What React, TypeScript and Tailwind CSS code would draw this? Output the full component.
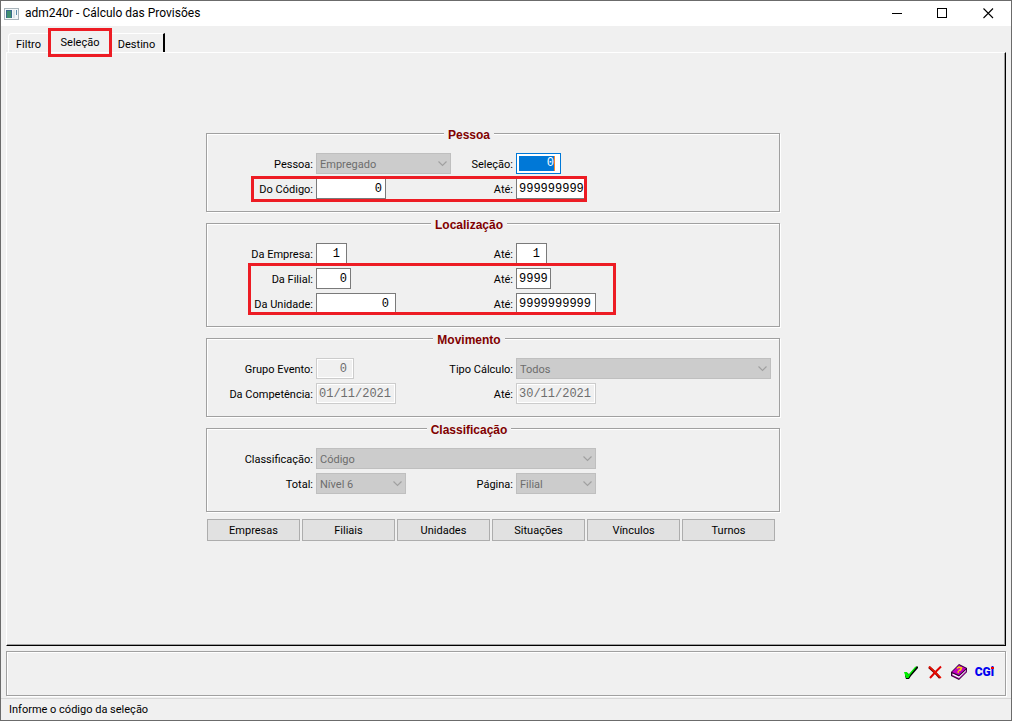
import type { InputHTMLAttributes, ReactNode } from 'react'
import clsx from 'clsx'

const etched = 'border border-[#a0a0a0] shadow-[1px_1px_0_#fff,inset_1px_1px_0_#fff]'

function Group({ title, className, children }: { title: string; className?: string; children: ReactNode }) {
  return (
    <fieldset className={clsx('min-w-0 pr-12 pt-[10px]', className ?? 'pb-[12px]', etched)}>
      <legend className="mx-auto bg-[#f0f0f0] px-1 pt-1 font-['Liberation_Sans',sans-serif] text-[12px] font-bold leading-[15px] text-[#800000]">
        {title}
      </legend>
      <div className="-mr-12 flex flex-col gap-1">{children}</div>
    </fieldset>
  )
}

function Row({ children }: { children: ReactNode }) {
  return <div className="grid grid-cols-[106px_130px_64px_1fr] items-center gap-x-[3px]">{children}</div>
}

function Label({ id, children }: { id: string; children: ReactNode }) {
  return (
    <label htmlFor={id} className="whitespace-nowrap pt-[2px] text-right">
      {children}
    </label>
  )
}

function Field({ className, ...props }: InputHTMLAttributes<HTMLInputElement>) {
  return (
    <input
      type="text"
      className={clsx(
        "h-[21px] border border-[#7a7a7a] bg-white pl-[2px] font-['Liberation_Mono',monospace] text-[12px] text-black outline-none",
        'disabled:border-[#ccc] disabled:bg-[#f0f0f0] disabled:text-[#6d6d6d] disabled:shadow-[inset_0_0_0_1px_#fff]',
        className,
      )}
      {...props}
    />
  )
}

function Combo({ id, value, className }: { id: string; value: string; className: string }) {
  return (
    <div className={clsx('relative h-[21px]', className)}>
      <select
        id={id}
        disabled
        className="block h-full w-full appearance-none border border-[#bfbfbf] bg-[#ccc] pl-[3px] pt-[2px] text-[#6d6d6d] opacity-100"
      >
        <option>{value}</option>
      </select>
      <svg className="pointer-events-none absolute right-1 top-2 h-[6px] w-[9px]" viewBox="0 0 9 6" fill="none">
        <path d="M.5 .5 4.5 4.5 8.5 .5" stroke="#a0a0a0" strokeWidth="1.1" />
      </svg>
    </div>
  )
}

function Marker({ className }: { className: string }) {
  return <div className={clsx('pointer-events-none absolute border-[3px] border-[#ed1c24]', className)} />
}

function TitleBar() {
  return (
    <header className="flex h-[25px] items-center bg-white pl-[3px]">
      <svg width="15" height="12" viewBox="0 0 15 12" shapeRendering="crispEdges">
        <rect width="15" height="12" fill="#a9b4ba" />
        <rect x="1" y="1" width="13" height="10" fill="#f4f8fa" />
        <rect x="2" y="2" width="6" height="8" fill="#38698c" />
        <rect x="3" y="3" width="4" height="7" fill="#3f8f70" />
        <rect x="9" y="2" width="2" height="8" fill="#dde6ea" />
        <rect x="12" y="2" width="1" height="5" fill="#5e8fae" />
      </svg>
      <h1 className="ml-[6px] text-[12px]">adm240r - Cálculo das Provisões</h1>
      <div className="ml-auto flex h-full">
        <button aria-label="Minimizar" className="flex w-[45px] items-center justify-center">
          <svg width="11" height="11" shapeRendering="crispEdges">
            <path d="M0 5.5H10" stroke="#000" />
          </svg>
        </button>
        <button aria-label="Maximizar" className="flex w-[45px] items-center justify-center">
          <svg width="11" height="11" shapeRendering="crispEdges">
            <rect x=".5" y=".5" width="9" height="9" fill="none" stroke="#000" />
          </svg>
        </button>
        <button aria-label="Fechar" className="flex w-[46px] items-center justify-center">
          <svg width="11" height="11">
            <path d="M.5 .5 10 10M10 .5 .5 10" stroke="#000" strokeWidth="1.1" />
          </svg>
        </button>
      </div>
    </header>
  )
}

function Tabs() {
  return (
    <nav role="tablist" className="flex items-end pl-[7px] pt-[7px]">
      <button role="tab" className="h-[19px] w-10 rounded-tl-sm border-l border-t border-white pt-[2px]">
        Filtro
      </button>
      <div className="relative">
        <button role="tab" aria-selected="true" className="block h-[19px] w-16">
          Seleção
        </button>
        <Marker className="-top-[5px] left-0 h-[29px] w-16" />
      </div>
      <button role="tab" className="h-[19px] w-[53px] border-r-2 border-t border-r-black border-t-white pr-[2px] pt-[2px]">
        Destino
      </button>
    </nav>
  )
}

function Toolbar() {
  return (
    <div className={clsx('mx-[5px] mt-[5px] flex h-[45px] items-center justify-end gap-2 pb-[3px] pr-[11px]', etched)}>
      <button aria-label="Confirmar">
        <svg width="16" height="16" viewBox="0 0 16 16">
          <path d="M2 9H5L6 11 13 2.500H15V4L8 12 6 15H3L2 12Z" fill="#000" />
          <path d="M1 8H4L5.500 10.500 12 3 14 2.500 7.500 10.500 5.500 14H3Z" fill="#00ee00" />
        </svg>
      </button>
      <button aria-label="Cancelar">
        <svg width="16" height="16" viewBox="0 0 16 16">
          <path d="M2 3 8 8.500 13 14" fill="none" stroke="#800000" strokeWidth="2.500" />
          <path d="M14 2.500 8 8.500 3 14" fill="none" stroke="#e00000" strokeWidth="2" />
          <path d="M2 2.500 8 8 14 14" fill="none" stroke="#f01000" strokeWidth="1.500" />
        </svg>
      </button>
      <button aria-label="Ajuda">
        <svg width="16" height="16" viewBox="0 0 16 16">
          <path d="M8 0 16 4V8L8 16 0 12V8Z" fill="#300030" />
          <path d="M8 1 15 4.500 8 11 1 8Z" fill="#c000c0" />
          <path d="M1 9.500 8 13 15.500 6V8L8 15 1 11.500Z" fill="#a000a0" />
          <path d="M1.500 9.500 8 12.500 15 6V7L8 14 1.500 11Z" fill="#fff" />
          <path d="M6 4.500 8 3 10.500 4 9.500 6 7.500 6.500M6.500 8H8" fill="none" stroke="#ffd800" strokeWidth="1.500" />
        </svg>
      </button>
      <button aria-label="CGi" className="relative text-[12px] font-black leading-4 text-[#0000f0]">
        CGi
        <span className="absolute right-0 top-[3px] h-[2px] w-[3px] bg-[#f00000]" />
      </button>
    </div>
  )
}

const filters = ['Empresas', 'Filiais', 'Unidades', 'Situações', 'Vínculos', 'Turnos']

export default function App() {
  return (
    <div className="flex min-h-screen flex-col border border-[#6b6b6b] bg-[#f0f0f0] font-['Roboto','Liberation_Sans',sans-serif] text-[11px] leading-[15px] text-black">
      <TitleBar />
      <Tabs />
      <main className="mx-[5px] flex flex-1 flex-col border-b border-l border-r border-t border-b-black border-l-white border-r-black border-t-white pr-[26px] shadow-[inset_-1px_-1px_0_#a0a0a0]">
        <form className="mx-auto mt-[71px] flex w-full max-w-[574px] flex-col gap-[2px]">
          <Group title="Pessoa">
            <Row>
              <Label id="pessoa">Pessoa:</Label>
              <Combo id="pessoa" value="Empregado" className="w-[135px]" />
              <Label id="selecao">Seleção:</Label>
              <div className="h-[21px] w-[45px] border border-[#0078d7] bg-white px-[2px] py-[2px]">
                <input
                  id="selecao"
                  type="text"
                  defaultValue="0"
                  className="block h-[15px] w-9 border-r border-[#ff8728] bg-[#0078d7] text-right font-['Liberation_Mono',monospace] text-[12px] text-white outline-none"
                />
              </div>
            </Row>
            <div className="relative">
              <Row>
                <Label id="codigo-de">Do Código:</Label>
                <Field id="codigo-de" defaultValue="0" className="w-[70px] pr-[3px] text-right" />
                <Label id="codigo-ate">Até:</Label>
                <Field id="codigo-ate" defaultValue="999999999" className="w-[70px]" />
              </Row>
              <Marker className="-top-[2px] left-[44px] h-[26px] w-[336px]" />
            </div>
          </Group>

          <Group title="Localização">
            <Row>
              <Label id="empresa-de">Da Empresa:</Label>
              <Field id="empresa-de" defaultValue="1" className="w-[31px] pr-[6px] text-right" />
              <Label id="empresa-ate">Até:</Label>
              <Field id="empresa-ate" defaultValue="1" className="w-[31px] pr-[6px] text-right" />
            </Row>
            <div className="relative flex flex-col gap-1">
              <Row>
                <Label id="filial-de">Da Filial:</Label>
                <Field id="filial-de" defaultValue="0" className="w-[35px] pr-[3px] text-right" />
                <Label id="filial-ate">Até:</Label>
                <Field id="filial-ate" defaultValue="9999" className="w-[35px]" />
              </Row>
              <Row>
                <Label id="unidade-de">Da Unidade:</Label>
                <Field id="unidade-de" defaultValue="0" className="w-[80px] pr-[6px] text-right" />
                <Label id="unidade-ate">Até:</Label>
                <Field id="unidade-ate" defaultValue="9999999999" className="w-[80px]" />
              </Row>
              <Marker className="-top-[5px] left-[41px] h-[52px] w-[368px]" />
            </div>
          </Group>

          <Group title="Movimento">
            <Row>
              <Label id="grupo">Grupo Evento:</Label>
              <Field id="grupo" disabled defaultValue="0" className="w-[38px] pr-[6px] text-right" />
              <Label id="calculo">Tipo Cálculo:</Label>
              <Combo id="calculo" value="Todos" className="w-[255px]" />
            </Row>
            <Row>
              <Label id="competencia-de">Da Competência:</Label>
              <Field id="competencia-de" disabled defaultValue="01/11/2021" className="w-[80px]" />
              <Label id="competencia-ate">Até:</Label>
              <Field id="competencia-ate" disabled defaultValue="30/11/2021" className="w-[80px]" />
            </Row>
          </Group>

          <Group title="Classificação" className="pb-[17px]">
            <Row>
              <Label id="classificacao">Classificação:</Label>
              <Combo id="classificacao" value="Código" className="col-span-3 w-[280px]" />
            </Row>
            <Row>
              <Label id="total">Total:</Label>
              <Combo id="total" value="Nível 6" className="w-[90px]" />
              <Label id="pagina">Página:</Label>
              <Combo id="pagina" value="Filial" className="w-[80px]" />
            </Row>
          </Group>

          <div className="mt-[5px] flex gap-[2px] pl-px pr-[5px]">
            {filters.map((name) => (
              <button key={name} type="button" className="h-[22px] flex-1 border border-[#adadad] bg-[#e1e1e1]">
                {name}
              </button>
            ))}
          </div>
        </form>
      </main>
      <Toolbar />
      <footer className="mt-[2px] flex h-[22px] items-center border-t border-[#d7d7d7] pl-2">
        Informe o código da seleção
      </footer>
    </div>
  )
}
